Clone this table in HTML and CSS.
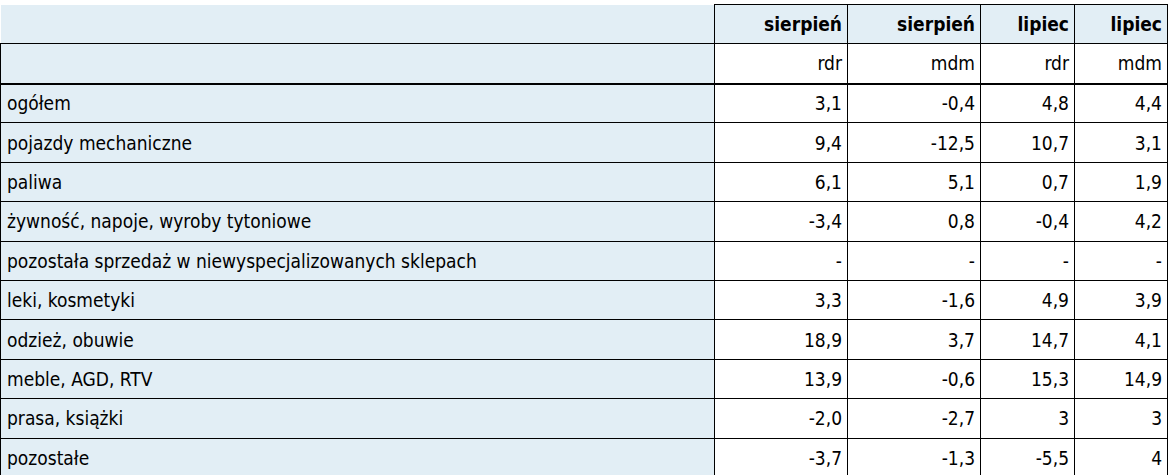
FILE: index.html
```html
<!DOCTYPE html>
<html lang="pl">
<head>
<meta charset="utf-8">
<link rel="stylesheet" href="styles.css">
</head>
<body>
<div class="page">
<table class="data">
<colgroup>
<col class="c-label"><col class="c-a"><col class="c-b"><col class="c-c"><col class="c-d">
</colgroup>
<thead>
<tr class="head1"><th class="corner"></th><th>sierpień</th><th>sierpień</th><th>lipiec</th><th>lipiec</th></tr>
<tr class="head2"><th class="label"></th><th>rdr</th><th>mdm</th><th>rdr</th><th>mdm</th></tr>
</thead>
<tbody>
<tr><td class="label">ogółem</td><td>3,1</td><td>-0,4</td><td>4,8</td><td>4,4</td></tr>
<tr><td class="label">pojazdy mechaniczne</td><td>9,4</td><td>-12,5</td><td>10,7</td><td>3,1</td></tr>
<tr><td class="label">paliwa</td><td>6,1</td><td>5,1</td><td>0,7</td><td>1,9</td></tr>
<tr><td class="label">żywność, napoje, wyroby tytoniowe</td><td>-3,4</td><td>0,8</td><td>-0,4</td><td>4,2</td></tr>
<tr><td class="label">pozostała sprzedaż w niewyspecjalizowanych sklepach</td><td>-</td><td>-</td><td>-</td><td>-</td></tr>
<tr><td class="label">leki, kosmetyki</td><td>3,3</td><td>-1,6</td><td>4,9</td><td>3,9</td></tr>
<tr><td class="label">odzież, obuwie</td><td>18,9</td><td>3,7</td><td>14,7</td><td>4,1</td></tr>
<tr><td class="label">meble, AGD, RTV</td><td>13,9</td><td>-0,6</td><td>15,3</td><td>14,9</td></tr>
<tr><td class="label">prasa, książki</td><td>-2,0</td><td>-2,7</td><td>3</td><td>3</td></tr>
<tr><td class="label">pozostałe</td><td>-3,7</td><td>-1,3</td><td>-5,5</td><td>4</td></tr>
</tbody>
</table>
</div>
</body>
</html>
```
FILE: styles.css
```css
html, body {
  margin: 0;
  padding: 0;
  background: #ffffff;
}

.page {
  padding-top: 4px;
}

.data {
  border-collapse: collapse;
  table-layout: fixed;
  width: 1167px;
  font-family: "DejaVu Sans Condensed", "DejaVu Sans", sans-serif;
  font-size: 19px;
  color: #000;
}

.c-label { width: 714px; }
.c-a { width: 133px; }
.c-b { width: 133px; }
.c-c { width: 94px; }
.c-d { width: 93px; }

.data th,
.data td {
  border: 1px solid #000;
  padding: 0 5px 0 6px;
  text-align: right;
  vertical-align: middle;
  background: #fff;
  white-space: nowrap;
}

.head1 { height: 39px; }
.head1 th {
  background: #e2eef5;
  font-weight: bold;
}
.head1 th.corner {
  border-top: none;
  border-left: none;
}

.head2 { height: 40px; }
.head2 th {
  font-weight: normal;
  border-bottom: 2px solid #000;
}

.data .label {
  background: #e2eef5;
  text-align: left;
}

tbody tr { height: 39.4px; }
```
